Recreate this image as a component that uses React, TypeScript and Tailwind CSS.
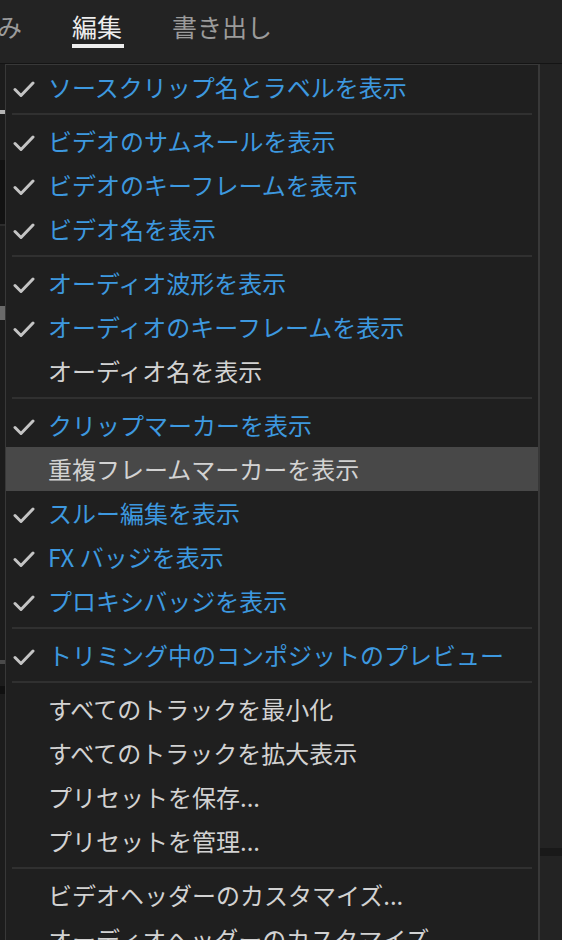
import React from 'react';

type Item =
  | { kind: 'item'; label: string; checked?: boolean; active?: boolean }
  | { kind: 'sep' };

const items: Item[] = [
  { kind: 'item', label: 'ソースクリップ名とラベルを表示', checked: true },
  { kind: 'sep' },
  { kind: 'item', label: 'ビデオのサムネールを表示', checked: true },
  { kind: 'item', label: 'ビデオのキーフレームを表示', checked: true },
  { kind: 'item', label: 'ビデオ名を表示', checked: true },
  { kind: 'sep' },
  { kind: 'item', label: 'オーディオ波形を表示', checked: true },
  { kind: 'item', label: 'オーディオのキーフレームを表示', checked: true },
  { kind: 'item', label: 'オーディオ名を表示' },
  { kind: 'sep' },
  { kind: 'item', label: 'クリップマーカーを表示', checked: true },
  { kind: 'item', label: '重複フレームマーカーを表示', active: true },
  { kind: 'item', label: 'スルー編集を表示', checked: true },
  { kind: 'item', label: 'FX バッジを表示', checked: true },
  { kind: 'item', label: 'プロキシバッジを表示', checked: true },
  { kind: 'sep' },
  { kind: 'item', label: 'トリミング中のコンポジットのプレビュー', checked: true },
  { kind: 'sep' },
  { kind: 'item', label: 'すべてのトラックを最小化' },
  { kind: 'item', label: 'すべてのトラックを拡大表示' },
  { kind: 'item', label: 'プリセットを保存...' },
  { kind: 'item', label: 'プリセットを管理...' },
  { kind: 'sep' },
  { kind: 'item', label: 'ビデオヘッダーのカスタマイズ...' },
  { kind: 'item', label: 'オーディオヘッダーのカスタマイズ...' },
];

function Check() {
  return (
    <svg width="22" height="18" viewBox="0 0 22 18" className="shrink-0 mt-[3px]">
      <path d="M2 9.5 L8 15.5 L20 3" fill="none" stroke="#c4c4c4" strokeWidth="3" strokeLinecap="round" strokeLinejoin="round" />
    </svg>
  );
}

function MenuRow({ item }: { item: Extract<Item, { kind: 'item' }> }) {
  return (
    <div className={`h-[44px] flex items-center shrink-0 ${item.active ? 'bg-[#484848]' : ''}`}>
      <div className="w-[42px] pl-[7px] flex justify-start">
        {item.checked && <Check />}
      </div>
      <span
        className={`text-[24px] leading-[44px] whitespace-nowrap ${
          item.checked ? 'text-[#3d98df]' : 'text-[#d2d2d2]'
        }`}
      >
        {item.label}
      </span>
    </div>
  );
}

function LeftStrip() {
  return (
    <div className="w-[5px] shrink-0 bg-[#1c1c1c] flex flex-col">
      <div className="h-[46px]" />
      <div className="h-[4px] bg-[#b5b5b5]" />
      <div className="h-[46px]" />
      <div className="h-[64px] bg-[#121212]" />
      <div className="h-[2px] bg-[#2c2c2c]" />
      <div className="h-[80px]" />
      <div className="h-[14px] bg-[#6a6a6a]" />
      <div className="h-[340px]" />
      <div className="h-[4px] bg-[#4a4a4a]" />
      <div className="h-[22px]" />
      <div className="h-[8px] bg-[#101010]" />
    </div>
  );
}

function RightStrip() {
  return (
    <div className="flex-1 bg-[#232323] flex flex-col">
      <div className="h-[784px]" />
      <div className="h-[8px] bg-[#191919]" />
    </div>
  );
}

export default function App() {
  return (
    <div
      className="w-[562px] h-[940px] overflow-hidden bg-[#1b1b1b] flex flex-col"
      style={{ fontFamily: '"Noto Sans CJK JP", "Noto Sans", sans-serif' }}
    >
      <header className="h-[64px] shrink-0 bg-[#232323] border-b border-[#141414] relative flex items-start text-[25px]">
        <span className="absolute left-[-3px] top-[8px] leading-[36px] text-[#9b9b9b]">み</span>
        <div className="absolute left-[72px] top-[8px] flex flex-col items-start">
          <span className="leading-[36px] text-[#ededed]">編集</span>
          <div className="h-[4px] w-[52px] bg-[#ededed]" />
        </div>
        <span className="absolute left-[172px] top-[8px] leading-[36px] text-[#9b9b9b]">書き出し</span>
      </header>
      <div className="flex flex-1 min-h-0">
        <LeftStrip />
        <div className="w-[535px] shrink-0 bg-[#1f1f1f] border-l border-t border-r-2 border-[#383838] flex flex-col overflow-hidden">
          {items.map((it, i) =>
            it.kind === 'sep' ? (
              <div key={i} className="h-[10px] shrink-0 flex items-center px-[6px]">
                <div className="h-[2px] w-full bg-[#303030]" />
              </div>
            ) : (
              <MenuRow key={i} item={it} />
            )
          )}
        </div>
        <RightStrip />
      </div>
    </div>
  );
}
